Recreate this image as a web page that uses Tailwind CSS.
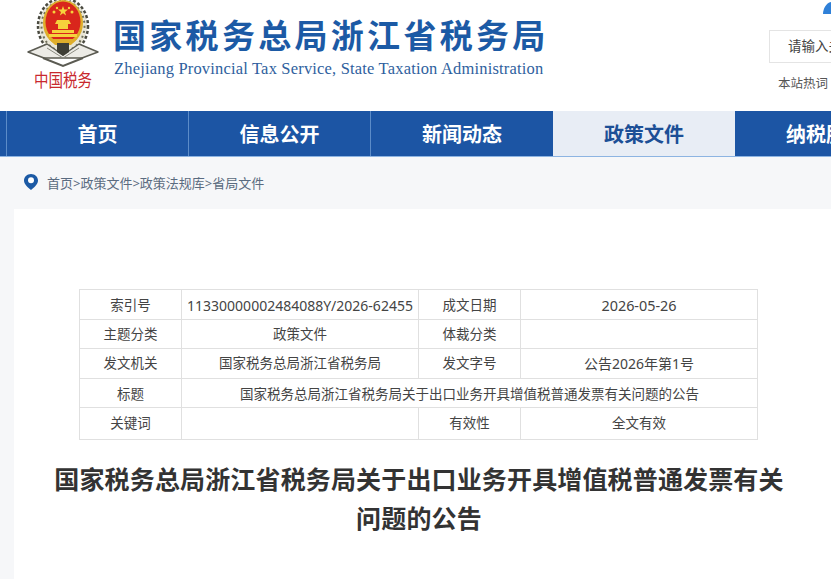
<!DOCTYPE html>
<html lang="zh-CN">
<head>
    <meta charset="UTF-8">
    <title>国家税务总局浙江省税务局</title>
    <script src="https://cdn.jsdelivr.net/npm/@tailwindcss/browser@4"></script>
</head>
<body class="h-[579px] w-[831px] overflow-hidden bg-[#f6f7f9] font-['Noto_Sans','Noto_Sans_CJK_SC',sans-serif]">
    <!-- Header -->
    <header class="relative flex h-[111px] bg-white">
        <div class="ml-[24px] flex w-[78px] flex-col items-center">
            <svg class="h-[68px] w-[78px]" viewBox="0 0 78 68">
                <!-- wreath -->
                <ellipse cx="39" cy="26" rx="24" ry="27" fill="#e9e6d6"/>
                <ellipse cx="39" cy="26" rx="25" ry="28" fill="none" stroke="#4a4a40" stroke-width="2.500" stroke-dasharray="3 2"/>
                <ellipse cx="39" cy="26" rx="21.500" ry="25" fill="none" stroke="#6f6f5c" stroke-width="2" stroke-dasharray="2 3"/>
                <!-- shield -->
                <ellipse cx="39" cy="23" rx="20" ry="23" fill="#dfae2b"/>
                <ellipse cx="39" cy="22" rx="17.500" ry="20.500" fill="#d9261c"/>
                <path d="M39 6l1.300 3.600h3.700l-3 2.300 1.100 3.600-3.100-2.200-3.100 2.200 1.100-3.600-3-2.300h3.700z" fill="#f6d23c"/>
                <circle cx="30" cy="12" r="1.500" fill="#f6d23c"/>
                <circle cx="48" cy="12" r="1.500" fill="#f6d23c"/>
                <circle cx="33" cy="8" r="1.200" fill="#f6d23c"/>
                <circle cx="45" cy="8" r="1.200" fill="#f6d23c"/>
                <path d="M33 20h12l2 4H31zM34 24h10v5H34zM28 30h22v3H28zM25 34h28v3H25z" fill="#f6d23c"/>
                <path d="M25 39h28l-6 6H31z" fill="#dfae2b"/>
                <!-- base wings -->
                <path d="M4 52l19-8 16 11 16-11 19 8-16 6H20z" fill="#ecebe6" stroke="#5b5b52" stroke-width="1.500" stroke-linejoin="round"/>
                <path d="M19 58l20 8 20-8" fill="none" stroke="#5b5b52" stroke-width="2"/>
                <path d="M23 48l16 10 16-10" fill="none" stroke="#8a8a80" stroke-width="1"/>
                <path d="M33 43h12v9l-6 4-6-4z" fill="#3f3f36"/>
            </svg>
            <div class="mt-[2px] scale-y-[1.25] text-[14.500px] leading-[18px] whitespace-nowrap text-[#c8282e]">中国税务</div>
        </div>
        <div class="ml-[11px] flex flex-col">
            <div class="mt-[14px] text-[33px] leading-[44px] font-bold tracking-[3.300px] whitespace-nowrap text-[#1c5aa5]">国家税务总局浙江省税务局</div>
            <div class="mt-[1px] ml-[1px] font-['Liberation_Serif',serif] text-[16.500px] leading-[20px] tracking-[0.180px] whitespace-nowrap text-[#2f5f9e]">Zhejiang Provincial Tax Service, State Taxation Administration</div>
        </div>
        <div class="absolute top-[30px] left-[769px] flex h-[33px] w-[80px] items-center border border-[#e4e4e4] pl-[18px] text-[13.500px] whitespace-nowrap text-[#444]">请输入关键词</div>
        <div class="absolute top-[75px] left-[778px] text-[12.500px] leading-[18px] whitespace-nowrap text-[#555]">本站热词</div>
        <svg class="absolute top-[2px] left-[823px] h-[12px] w-[8px]" viewBox="0 0 8 12"><path d="M0 12c0-5 3-11 8-12v12z" fill="#2f80d8"/></svg>
    </header>

    <!-- Nav -->
    <nav class="flex h-[46px] border-b border-[#8db4e2] bg-[#1c55a4] text-[20px] leading-[47px] font-bold text-white">
        <div class="w-[7px] border-r border-[#5c8cc8]"></div>
        <a class="w-[182px] border-r border-[#5c8cc8] text-center">首页</a>
        <a class="w-[182px] border-r border-[#5c8cc8] text-center">信息公开</a>
        <a class="w-[182px] text-center">新闻动态</a>
        <a class="w-[182px] bg-[#e8edf5] text-center text-[#1c4f96]">政策文件</a>
        <a class="w-[96px] pl-[51px] whitespace-nowrap">纳税服务</a>
    </nav>

    <!-- Breadcrumb -->
    <div class="flex h-[52px] items-center pb-[2px] pl-[24px] text-[13px] text-[#5a6b80]">
        <svg class="mr-[9px] h-[16px] w-[14px]" viewBox="0 0 14 16">
            <path d="M7 0C3.100 0 0 2.900 0 6.500 0 10.500 4 13.500 7 16c3-2.500 7-5.500 7-9.500C14 2.900 10.900 0 7 0z" fill="#1c5aa5"/>
            <circle cx="7" cy="6.300" r="3" fill="#fff"/>
        </svg>
        <span class="pt-[3px]">首页&gt;政策文件&gt;政策法规库&gt;省局文件</span>
    </div>

    <!-- Article card -->
    <main class="ml-[14px] h-[370px] bg-white pt-[80px]">
        <div class="ml-[65px] grid w-[679px] grid-cols-[102px_237px_102px_237px] grid-rows-[30px_29px_30px_29px_32px] items-stretch border-t border-l border-[#e0e0e0] text-[13.500px] leading-[29px] text-[#444] [&>div]:border-r [&>div]:border-b [&>div]:border-[#e0e0e0] [&>div]:text-center [&>div]:whitespace-nowrap">
            <div class="leading-[31px]">索引号</div><div class="text-[14px] leading-[31px]">11330000002484088Y/2026-62455</div><div class="leading-[31px]">成文日期</div><div class="text-[14.400px] leading-[31px]">2026-05-26</div>
            <div>主题分类</div><div>政策文件</div><div>体裁分类</div><div></div>
            <div>发文机关</div><div>国家税务总局浙江省税务局</div><div>发文字号</div><div class="text-[14px]">公告2026年第1号</div>
            <div class="leading-[31px]">标题</div><div class="col-span-3 leading-[31px]">国家税务总局浙江省税务局关于出口业务开具增值税普通发票有关问题的公告</div>
            <div class="leading-[31px]">关键词</div><div></div><div class="leading-[31px]">有效性</div><div class="leading-[31px]">全文有效</div>
        </div>
        <h1 class="mt-[20px] ml-[35px] w-[740px] text-center text-[25px] leading-[39px] font-bold tracking-[0.150px] text-[#333]">国家税务总局浙江省税务局关于出口业务开具增值税普通发票有关问题的公告</h1>
    </main>
</body>
</html>
